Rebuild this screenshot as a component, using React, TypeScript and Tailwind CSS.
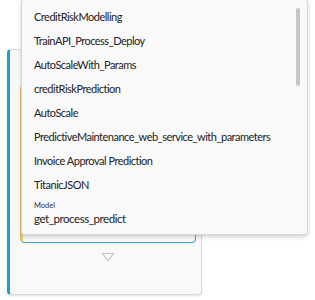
const items = [
  'CreditRiskModelling',
  'TrainAPI_Process_Deploy',
  'AutoScaleWith_Params',
  'creditRiskPrediction',
  'AutoScale',
  'PredictiveMaintenance_web_service_with_parameters',
  'Invoice Approval Prediction',
  'TitanicJSON',
];

export default function App() {
  return (
    <div
      className="relative h-[300px] w-[315px] overflow-hidden bg-white text-[#222]"
      style={{ fontFamily: 'Lato, "Noto Sans", sans-serif' }}
    >
      <div className="pl-[7px] pt-[49px]">
        <div className="flex h-[246px] w-[195px] flex-col items-center rounded-[4px] border border-l-[3px] border-[#dcdcdc] border-l-[#1aa3c8] bg-[#f9f9f9] pt-[35px] shadow-[0_1px_2px_rgba(0,0,0,0.12)]">
          <div className="ml-[5px] h-[158px] w-[176px] rounded-[4px] border border-l-[3px] border-[#33a9de] border-l-[#e2c66a] bg-[#f9f9f9]" />
          <svg width="14" height="10" viewBox="0 0 14 10" className="mt-[9px] ml-[5px]">
            <path d="M1.5 1.5 L12.5 1.5 L7 8.5 Z" fill="none" stroke="#c4c4c4" strokeWidth="1.2" />
          </svg>
        </div>
      </div>

      <div className="absolute left-[21px] top-[-1px] flex h-[236px] w-[287px] rounded-[3px] border border-[#d6d6d6] bg-[#f9f9f9] shadow-[0_2px_4px_rgba(0,0,0,0.18)]">
        <div className="flex min-w-0 flex-1 flex-col pl-[12px] pt-[7px]">
          <ul className="flex flex-col">
            {items.map((item) => (
              <li key={item} className="h-[24px] whitespace-nowrap text-[11px] leading-[20px] tracking-[-0.5px]">
                {item}
              </li>
            ))}
          </ul>
          <div className="mt-[2px] text-[7.5px] leading-[10px] text-[#333]">Model</div>
          <div className="text-[11.5px] leading-[16px] tracking-[-0.45px]">get_process_predict</div>
        </div>
        <div className="mr-[7px] mt-[8px] h-[78px] w-[4px] shrink-0 rounded-full bg-[#c6c6c6]" />
      </div>
    </div>
  );
}
